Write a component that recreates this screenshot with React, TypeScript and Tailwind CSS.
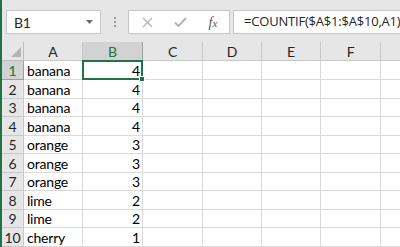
import React from "react";

const COLS = [
  { name: "A", w: 59 },
  { name: "B", w: 60 },
  { name: "C", w: 60 },
  { name: "D", w: 59 },
  { name: "E", w: 59 },
  { name: "F", w: 60 },
  { name: "", w: 60 },
];

const ROWS: { h: number; a: string; b: number }[] = [
  { h: 19, a: "banana", b: 4 },
  { h: 19, a: "banana", b: 4 },
  { h: 18, a: "banana", b: 4 },
  { h: 19, a: "banana", b: 4 },
  { h: 18, a: "orange", b: 3 },
  { h: 19, a: "orange", b: 3 },
  { h: 18, a: "orange", b: 3 },
  { h: 19, a: "lime", b: 2 },
  { h: 18, a: "lime", b: 2 },
  { h: 19, a: "cherry", b: 1 },
];

const cellFont = { fontFamily: "Lato, 'Open Sans', sans-serif", letterSpacing: "-0.2px" };

function FormulaBar() {
  return (
    <div className="flex h-[42px] items-start bg-[#e6e6e6] pl-[4px] pt-[10px]">
      {/* name box */}
      <div className="flex h-[24px] w-[95px] shrink-0 items-center justify-between border border-[#c6c6c6] bg-white pl-[7px] pr-[7px]">
        <span className="text-[14px] text-[#262626]" style={cellFont}>B1</span>
        <svg width="7" height="4" viewBox="0 0 7 4">
          <path d="M0 0h7L3.5 4z" fill="#6a6a6a" />
        </svg>
      </div>
      {/* grip */}
      <div className="flex w-[27px] shrink-0 flex-col items-center gap-[2px] pt-[7px]">
        <span className="h-[2px] w-[2px] bg-[#9a9a9a]" />
        <span className="h-[2px] w-[2px] bg-[#9a9a9a]" />
        <span className="h-[2px] w-[2px] bg-[#9a9a9a]" />
      </div>
      {/* buttons */}
      <div className="flex h-[24px] w-[102px] shrink-0 items-center border border-[#c6c6c6] bg-white">
        <div className="flex w-[36px] justify-center pl-[1px]">
          <svg width="11" height="11" viewBox="0 0 11 11">
            <path d="M1 1l9 9M10 1l-9 9" stroke="#b4b4b4" strokeWidth="1.3" />
          </svg>
        </div>
        <div className="flex w-[30px] justify-center">
          <svg width="13" height="10" viewBox="0 0 13 10">
            <path d="M1 5.5l3.5 3.5L12 1" stroke="#b4b4b4" strokeWidth="2" fill="none" />
          </svg>
        </div>
        <div className="flex w-[34px] justify-center pl-[2px]">
          <span
            className="text-[14px] italic text-[#555]"
            style={{ fontFamily: "'Liberation Serif', serif" }}
          >
            f<span className="text-[11px]">x</span>
          </span>
        </div>
      </div>
      {/* formula */}
      <div className="ml-[3px] flex h-[24px] min-w-0 flex-1 items-center overflow-hidden border border-r-0 border-[#c6c6c6] bg-white pl-[10px]">
        <span
          className="whitespace-nowrap text-[13px] text-[#262626]"
          style={{ fontFamily: "'Open Sans', sans-serif", letterSpacing: "-0.2px" }}
        >
          =COUNTIF($A$1:$A$10,A1)
        </span>
      </div>
    </div>
  );
}

function HeaderRow() {
  return (
    <div className="flex h-[19px] bg-[#e6e6e6]">
      <div className="relative h-full w-[22px] shrink-0 border-b border-r border-[#bcbcbc]">
        <svg className="absolute bottom-[3px] right-[2px]" width="10" height="10" viewBox="0 0 10 10">
          <path d="M10 0v10H0z" fill="#b4b4b4" />
        </svg>
      </div>
      {COLS.map((c, i) => {
        const sel = c.name === "B";
        return (
          <div
            key={i}
            className={
              "flex h-full shrink-0 items-center justify-center border-b border-r text-[14px] " +
              (sel
                ? "border-[#9e9e9e] bg-[#d2d2d2] text-[#217346]"
                : "border-[#c8c8c8] text-[#262626]")
            }
            style={{ width: c.w, ...cellFont }}
          >
            {c.name}
          </div>
        );
      })}
    </div>
  );
}

export default function App() {
  return (
    <div className="flex h-[247px] w-[400px] overflow-hidden bg-white">
      <div className="w-[2px] shrink-0 bg-[#217346]" />
      <div className="flex min-w-0 flex-1 flex-col">
        <FormulaBar />
        <HeaderRow />
        {ROWS.map((r, i) => {
          const sel = i === 0;
          return (
            <div key={i} className={"flex shrink-0 " + (sel ? "relative z-10" : "")} style={{ height: r.h }}>
              <div
                className={
                  "flex h-full w-[22px] shrink-0 items-end justify-center border-b border-r pb-[1px] text-[14px] leading-none " +
                  (sel
                    ? "border-[#9e9e9e] bg-[#d2d2d2] text-[#217346]"
                    : "border-[#c8c8c8] bg-[#e6e6e6] text-[#262626]")
                }
                style={cellFont}
              >
                {i + 1}
              </div>
              {COLS.map((c, j) => (
                <div
                  key={j}
                  className="relative flex h-full shrink-0 items-end border-b border-r border-[#dadada] pb-[1px] text-[14px] leading-none text-black"
                  style={{ width: c.w, ...cellFont }}
                >
                  {c.name === "A" && <span className="pl-[3px]">{r.a}</span>}
                  {c.name === "B" && <span className="ml-auto pr-[2px]">{r.b}</span>}
                  {c.name === "B" && sel && (
                    <div className="absolute -left-[1px] -top-[1px] z-10 h-[20px] w-[61px] border-2 border-[#217346]">
                      <div className="absolute -bottom-[4px] -right-[4px] h-[6px] w-[6px] border border-white bg-[#217346]" />
                    </div>
                  )}
                </div>
              ))}
            </div>
          );
        })}
      </div>
    </div>
  );
}
